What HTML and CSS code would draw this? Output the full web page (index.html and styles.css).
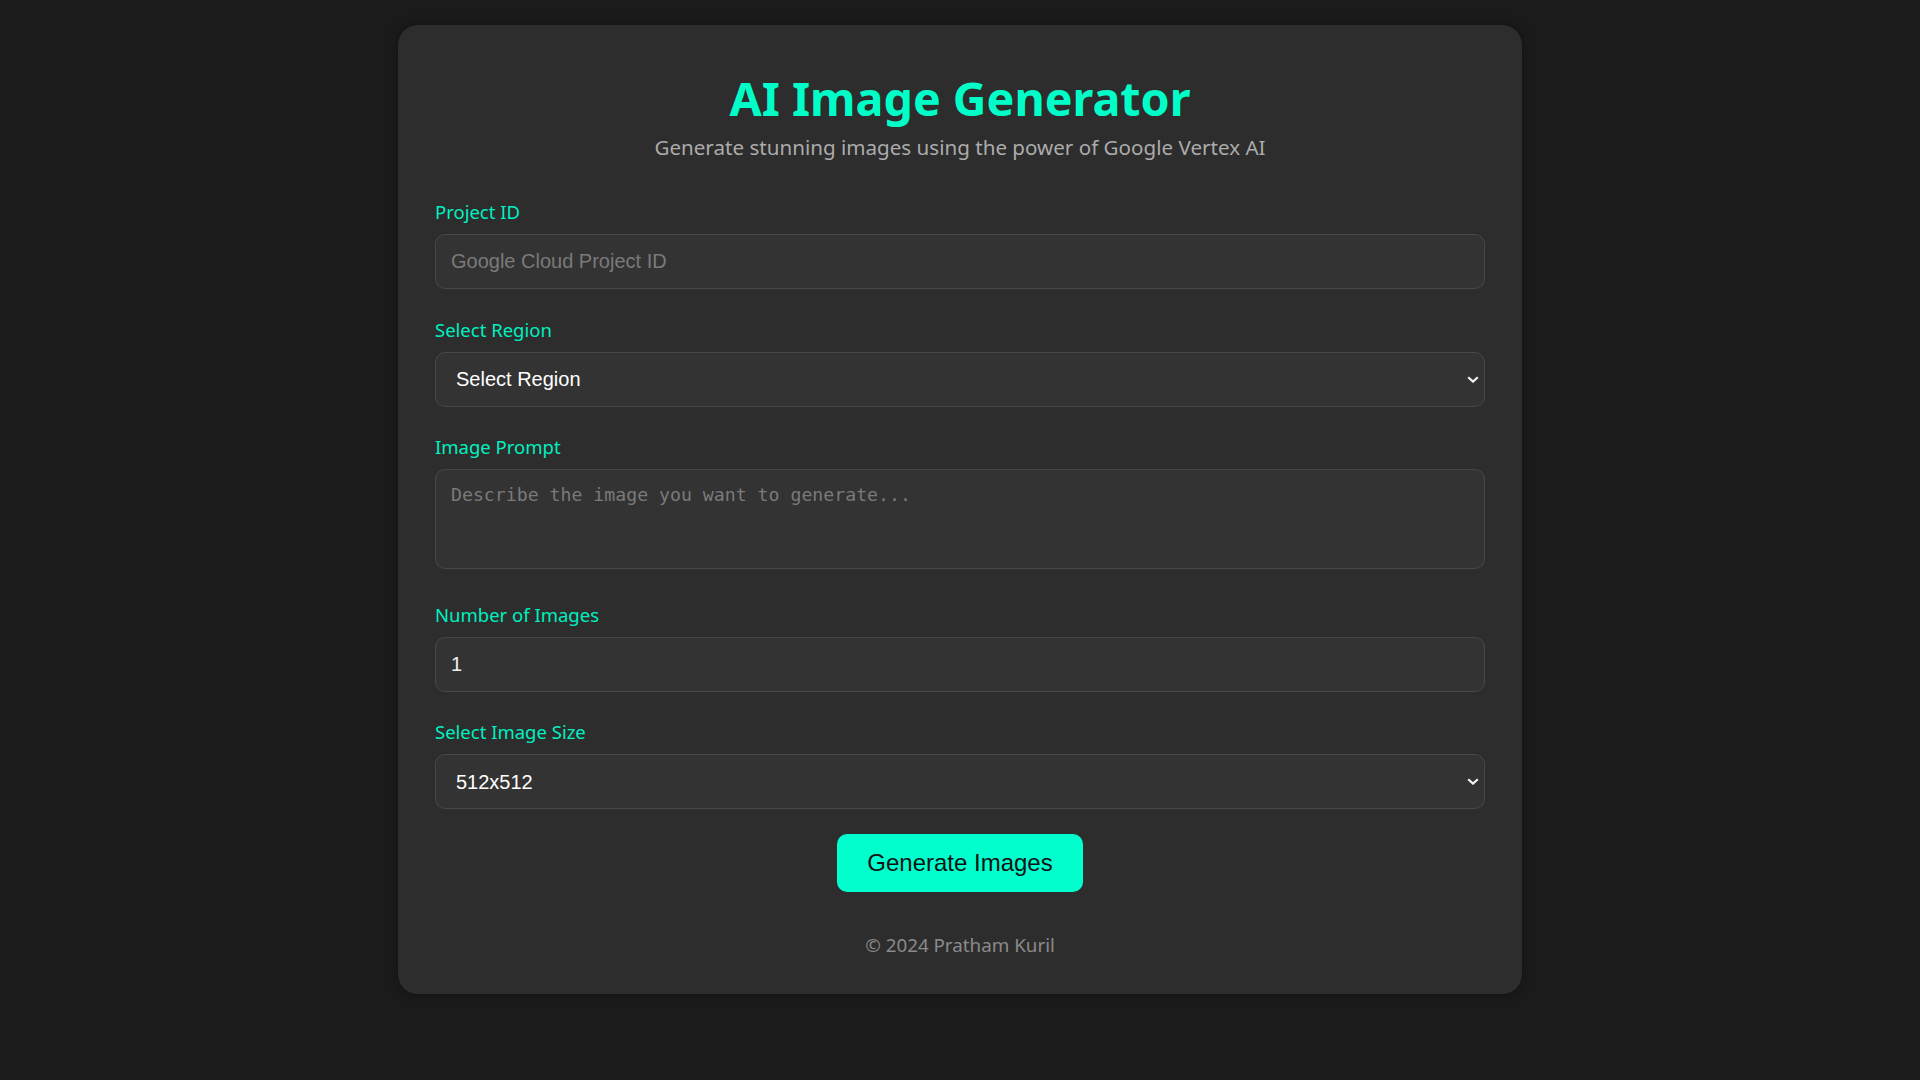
FILE: index.html
```html
<!DOCTYPE html>
<html lang="en">
<head>
<meta charset="UTF-8">
<title>AI Image Generator</title>
<link rel="stylesheet" href="styles.css">
</head>
<body>
<main class="card">
  <header class="header">
    <h1 class="title">AI Image Generator</h1>
    <p class="subtitle">Generate stunning images using the power of Google Vertex AI</p>
  </header>
  <form class="form">
    <div class="group">
      <label class="label" for="project">Project ID</label>
      <input class="field" id="project" type="text" placeholder="Google Cloud Project ID">
    </div>
    <div class="group">
      <label class="label" for="region">Select Region</label>
      <div class="select-wrap">
        <select class="field select" id="region">
          <option>Select Region</option>
        </select>
        <svg class="chevron" viewBox="0 0 12 7" width="12" height="7"><path d="M1.2 1.2 L6 5.6 L10.8 1.2" fill="none" stroke="#f2f2f2" stroke-width="2.2"/></svg>
      </div>
    </div>
    <div class="group">
      <label class="label" for="prompt">Image Prompt</label>
      <textarea class="field area" id="prompt" placeholder="Describe the image you want to generate..."></textarea>
    </div>
    <div class="group">
      <label class="label" for="count">Number of Images</label>
      <input class="field" id="count" type="text" value="1">
    </div>
    <div class="group">
      <label class="label" for="size">Select Image Size</label>
      <div class="select-wrap">
        <select class="field select" id="size">
          <option>512x512</option>
        </select>
        <svg class="chevron" viewBox="0 0 12 7" width="12" height="7"><path d="M1.2 1.2 L6 5.6 L10.8 1.2" fill="none" stroke="#f2f2f2" stroke-width="2.2"/></svg>
      </div>
    </div>
    <div class="actions">
      <button class="button" type="button">Generate Images</button>
    </div>
  </form>
  <footer class="footer">© 2024 Pratham Kuril</footer>
</main>
</body>
</html>
```
FILE: styles.css
```css
* { box-sizing: border-box; }
html, body { margin: 0; padding: 0; }
body {
  background: #1b1b1b;
  font-family: "Noto Sans", "Open Sans", sans-serif;
  padding-top: 25px;
  min-height: 1080px;
}
.card {
  width: 1124px;
  margin: 0 auto;
  background: #2d2d2d;
  border-radius: 20px;
  padding: 42px 37px 35px;
  box-shadow: 0 0 12px rgba(0,0,0,0.35);
}
.header { text-align: center; margin-bottom: 36px; }
.title {
  margin: 0;
  color: #00ffc8;
  font-size: 46.6px;
  font-weight: 700;
  line-height: 62px;
}
.subtitle {
  margin: 3px 0 0;
  color: #ababab;
  font-size: 20.6px;
  line-height: 30px;
}
.form { display: flex; flex-direction: column; }
.group { display: flex; flex-direction: column; margin-bottom: 26.5px; }
.label {
  color: #00f0c0;
  font-size: 18.5px;
  line-height: 28px;
  margin-bottom: 8px;
}
.field {
  width: 100%;
  height: 55px;
  background: #333333;
  border: 1px solid #474747;
  border-radius: 10px;
  color: #f0f0f0;
  font-family: "Liberation Sans", Arial, sans-serif;
  font-size: 20px;
  padding: 0 15px;
  outline: none;
}
.field::placeholder { color: #7a7a7a; }
.select-wrap { position: relative; }
.select {
  appearance: none;
  -webkit-appearance: none;
  padding-left: 20px;
  color: #ffffff;
}
.chevron {
  position: absolute;
  right: 6px;
  top: 24px;
  pointer-events: none;
}
.area {
  display: block;
  height: 100px;
  padding: 14px 15px;
  resize: none;
  font-family: "DejaVu Sans Mono", "Liberation Mono", monospace;
  font-size: 18.2px;
  line-height: 22px;
  margin-bottom: 5px;
}
.actions { display: flex; justify-content: center; margin-top: -2px; }
.button {
  width: 246px;
  height: 58px;
  background: #00ffcc;
  color: #111;
  border: none;
  border-radius: 10px;
  font-family: "Liberation Sans", Arial, sans-serif;
  font-size: 24px;
}
.footer {
  text-align: center;
  color: #8a8a8a;
  font-size: 18.8px;
  line-height: 28px;
  margin-top: 39px;
}
```
